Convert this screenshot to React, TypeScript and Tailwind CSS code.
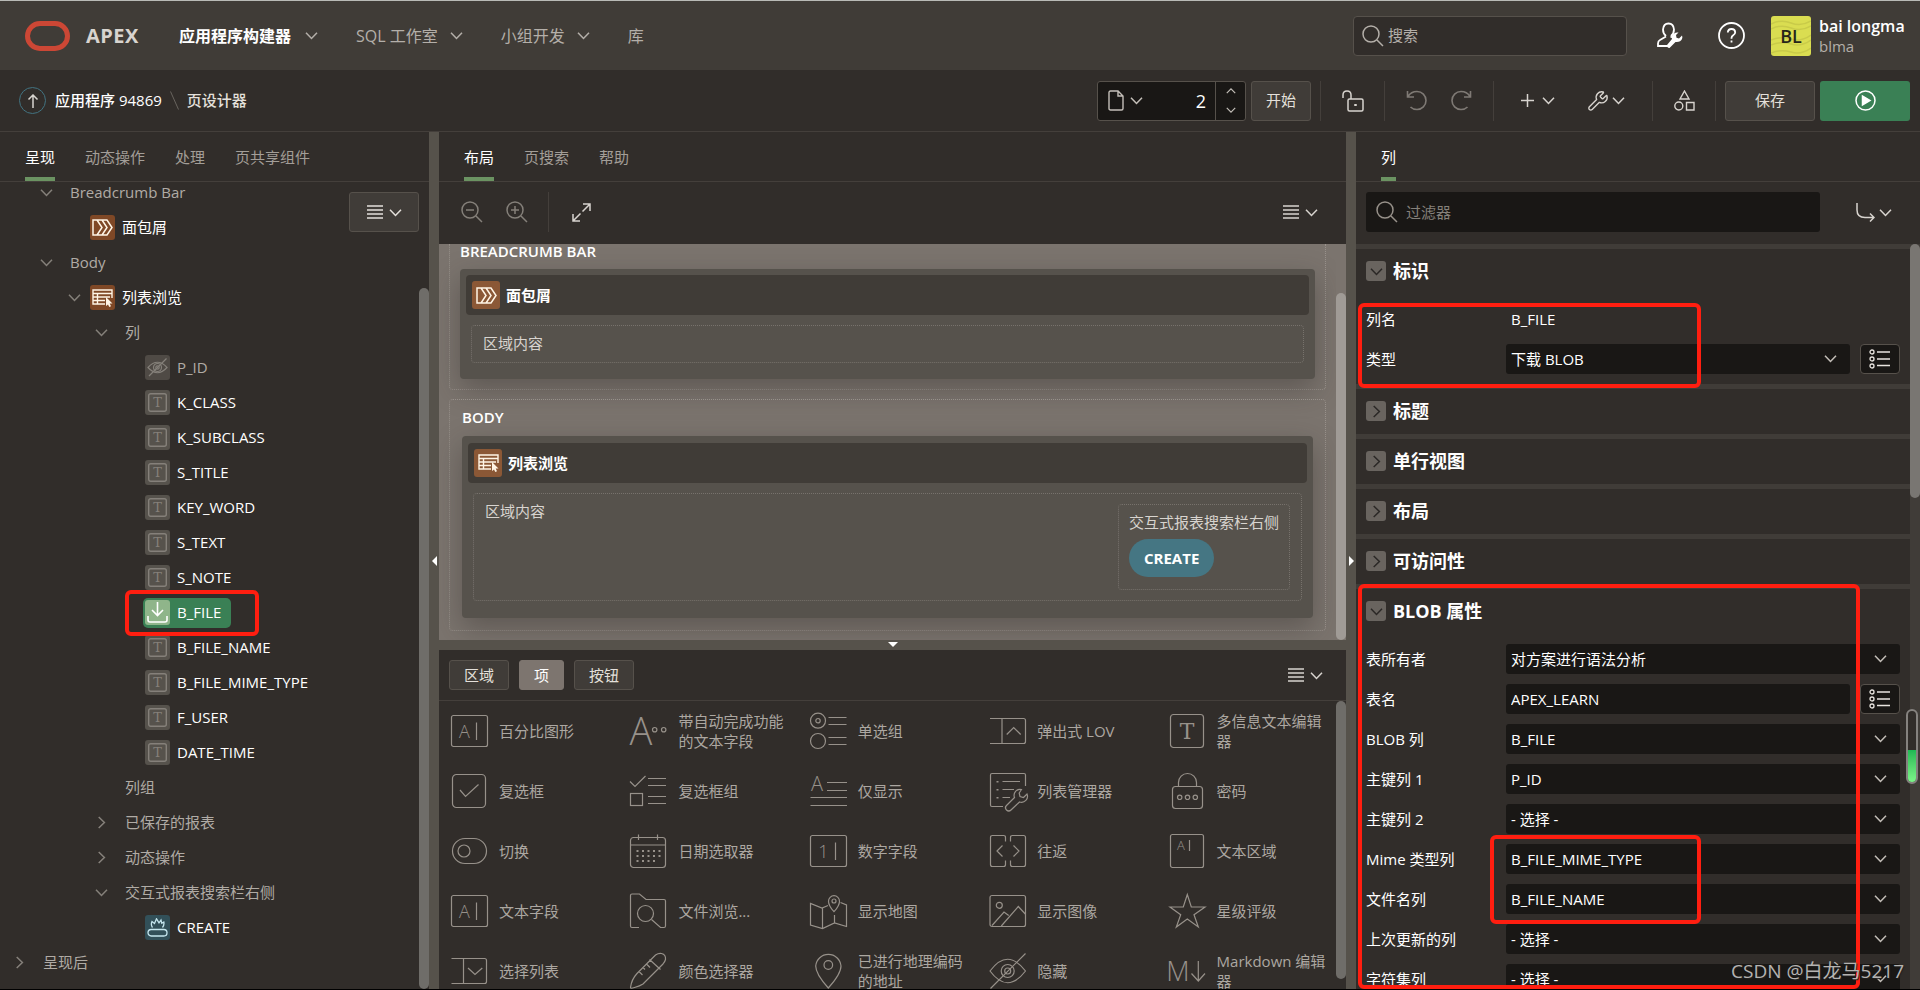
import { useState, type ReactNode } from "react"
import { Wrench } from "lucide-react"

/* ---------- icons ---------- */

function Chevron({ className = "" }: { className?: string }) {
  return (
    <svg width="13" height="13" viewBox="0 0 13 13" fill="none" stroke="currentColor" strokeWidth="1.5" className={`shrink-0 ${className}`}>
      <path d="M1 3.7 6.5 9.4 12 3.7" />
    </svg>
  )
}

function MenuLines() {
  return (
    <svg width="16" height="14" viewBox="0 0 16 14" stroke="currentColor" strokeWidth="1.3">
      <path d="M0 1h16M0 5h16M0 9h16M0 13h16" />
    </svg>
  )
}

function SearchIcon({ mark }: { mark?: string }) {
  return (
    <svg width="22" height="22" viewBox="0 0 22 22" fill="none" stroke="currentColor" strokeWidth="1.5" className="shrink-0">
      <circle cx="9" cy="9" r="8" />
      <path d="m15 15 6 6" />
      {mark && <path d={mark} />}
    </svg>
  )
}

function BreadcrumbIcon() {
  return (
    <svg width="21" height="17" viewBox="0 0 21 17" fill="none" stroke="#fff5e6" strokeWidth="1.5">
      <path d="M1 1h14l5 7.5-5 7.5H1zM5 1l5 7.5L5 16M10 1l5 7.5-5 7.5" />
    </svg>
  )
}

function ReportIcon() {
  return (
    <svg width="21" height="18" viewBox="0 0 21 18" fill="none" stroke="#fff5e6" strokeWidth="1.4">
      <path d="M13 15H1V1h19v8M1 4.5h19M1 8h17M1 11.5h12M5.5 4.5V15" />
      <path d="M14 8v9l2-1.5 1.300 2.500 1.700-.8-1.300-2.700h2.800z" fill="#fff5e6" stroke="none" />
    </svg>
  )
}

function TextColumnIcon() {
  return (
    <svg width="19" height="19" viewBox="0 0 19 19" fill="none" stroke="#85807a" strokeWidth="1.4">
      <rect x=".7" y=".7" width="17.6" height="17.6" rx="2" />
      <text x="9.5" y="14" textAnchor="middle" fontSize="13" fontFamily="DejaVu Serif, serif" fill="#85807a" stroke="none">T</text>
    </svg>
  )
}

function EyeOffIcon() {
  return (
    <svg width="21" height="19" viewBox="0 0 21 19" fill="none" stroke="#85807a" strokeWidth="1.2">
      <path d="M1 9.5Q10.5-1 20 9.5 10.5 20 1 9.500zM2 18 19.5.5" />
      <circle cx="10.5" cy="9.5" r="4" />
      <circle cx="10.5" cy="9.5" r="1.7" />
    </svg>
  )
}

function DownloadIcon() {
  return (
    <svg width="21" height="21" viewBox="0 0 21 21" fill="none" stroke="#fff" strokeWidth="1.6">
      <path d="M10.5 0v13M5 8l5.5 5.5L16 8M1 14v4q0 2 2 2h15q2 0 2-2v-4" />
    </svg>
  )
}

function HotButtonIcon() {
  return (
    <svg width="21" height="19" viewBox="0 0 21 19" fill="none" stroke="#c5e6ee" strokeWidth="1.3">
      <rect x="1" y="11.5" width="19" height="6.5" rx="3.2" />
      <path d="M5.5 9.500Q3.500 7 5 3.500l2.500 2L9.500.8l2.500 4 2-2.800.8 3.300 2-1.300Q17.500 7 15.500 9.500" />
    </svg>
  )
}

function ListIcon() {
  return (
    <svg width="22" height="20" viewBox="0 0 22 20" fill="none" stroke="#e8e4df" strokeWidth="1.3">
      <circle cx="3" cy="3" r="2" />
      <circle cx="3" cy="10" r="2" />
      <circle cx="3" cy="17" r="2" />
      <path d="M8 3h13M8 10h13M8 16.5h13" />
    </svg>
  )
}

function Glyph({ x, y, size, serif, children }: { x: number; y: number; size: number; serif?: boolean; children: string }) {
  return (
    <text x={x} y={y} fontSize={size} textAnchor="middle" fontWeight={300} fontFamily={serif ? "DejaVu Serif, serif" : "Open Sans, sans-serif"} fill="currentColor" stroke="none">
      {children}
    </text>
  )
}

const boxedText = (label: string) => (
  <>
    <rect x="1.5" y="3.5" width="36" height="31" rx="2" />
    <Glyph x={14.5} y={25.5} size={18}>{label}</Glyph>
    <path d="M26.5 10.5v17.5" />
  </>
)

const paletteItems: { label: string; icon: ReactNode }[] = [
  { label: "百分比图形", icon: boxedText("A") },
  {
    label: "带自动完成功能的文本字段",
    icon: (
      <>
        <Glyph x={12} y={33} size={38}>A</Glyph>
        <circle cx="25.7" cy="17.7" r="2.2" />
        <circle cx="34.7" cy="17.7" r="2.2" />
      </>
    ),
  },
  {
    label: "单选组",
    icon: (
      <>
        <circle cx="9" cy="8.7" r="7.5" />
        <circle cx="9" cy="8.7" r="2.2" />
        <circle cx="9" cy="29" r="7.5" />
        <path d="M19.5 5.5h18M19.5 12.5h18M19.5 25.5h18M19.5 32.5h18" />
      </>
    ),
  },
  { label: "弹出式 LOV", icon: <path d="M2 6.5h33.5q2 0 2 2v21q0 2-2 2H2M14 6.5v25M18.7 22.5l7-7 7 7" /> },
  {
    label: "多信息文本编辑器",
    icon: (
      <>
        <rect x="2.5" y="2.5" width="33" height="33" rx="3" />
        <Glyph x={19} y={27} size={22} serif>T</Glyph>
      </>
    ),
  },
  {
    label: "复选框",
    icon: (
      <>
        <rect x="2.5" y="2.5" width="33" height="33" rx="4" />
        <path d="m10 18 5.5 6.5 13-12" />
      </>
    ),
  },
  {
    label: "复选框组",
    icon: (
      <>
        <path d="m1 9.5 5 5L16.500 4M19 6.5h18M19 13.5h18M19 24.5h18M19 31.5h18" />
        <rect x="1.5" y="21.5" width="12" height="12" />
      </>
    ),
  },
  {
    label: "仅显示",
    icon: (
      <>
        <Glyph x={8} y={19} size={20}>A</Glyph>
        <path d="M18 10.5h20M18 18.5h20M1.5 25.5H38M1.5 33.5H38" />
      </>
    ),
  },
  {
    label: "列表管理器",
    icon: (
      <>
        <path d="M15 34.5H4q-1.500 0-1.500-1.500V3q0-1.500 1.500-1.500h32q1.500 0 1.500 1.500v11M14.500 9.500H32M14.500 17.500H26M14.500 25.500H22" />
        <path d="M9.5 9v1.5M9.5 17v1.5M9.5 25v1.5" strokeWidth="2" />
        <path d="M33.5 17.5a6 6 0 0 0-7 8L18.500 33.500a3 3 0 0 0 4.500 4.500l8.500-8a6 6 0 0 0 7.500-8l-3.500 3.500-3.500-1-.8-3.500z" />
      </>
    ),
  },
  {
    label: "密码",
    icon: (
      <>
        <rect x="4.5" y="14.5" width="30" height="22" rx="3" />
        <path d="M10.5 14.5v-4a9 9 0 0 1 18 0v4" />
        <circle cx="11.7" cy="25.3" r="2.2" />
        <circle cx="19.5" cy="25.3" r="2.2" />
        <circle cx="27.3" cy="25.3" r="2.2" />
      </>
    ),
  },
  {
    label: "切换",
    icon: (
      <>
        <rect x="2.5" y="6.5" width="34" height="25" rx="12.5" />
        <circle cx="14" cy="19" r="6" />
      </>
    ),
  },
  {
    label: "日期选取器",
    icon: (
      <>
        <rect x="1.5" y="5.5" width="35" height="30" rx="3" />
        <path d="M1.5 13h35M9.5 2.5V8M28.5 2.5V8" />
        <path d="M7.5 19h24M7.5 24h24M7.5 29h19" strokeWidth="2" strokeDasharray="2 3.5" />
      </>
    ),
  },
  { label: "数字字段", icon: boxedText("1") },
  {
    label: "往返",
    icon: <path d="M17.5 9.5v-4q0-2-2-2h-11q-2 0-2 2v27q0 2 2 2h11q2 0 2-2v-4M22.5 9.5v-4q0-2 2-2h11q2 0 2 2v27q0 2-2 2h-11q-2 0-2-2v-4M14.5 13.5 9 19l5.5 5.5M25.5 13.5 31 19l-5.5 5.5" />,
  },
  {
    label: "文本区域",
    icon: (
      <>
        <rect x="2.5" y="2.5" width="33" height="33" rx="2" />
        <Glyph x={13} y={18} size={13}>A</Glyph>
        <path d="M21.5 8v11" />
      </>
    ),
  },
  { label: "文本字段", icon: boxedText("A") },
  {
    label: "文件浏览...",
    icon: (
      <>
        <path d="M10 35.5H3q-1.500 0-1.500-1.500V3.500Q1.500 2 3 2h7.500l6.500 5.500h18q1.500 0 1.500 1.500v25q0 1.500-1.500 1.500h-3.500l-9-8" />
        <circle cx="16.5" cy="21.5" r="8" />
      </>
    ),
  },
  {
    label: "显示地图",
    icon: (
      <>
        <path d="M19 13.5l-6 2.5-11.500-4.500v21.500L13.500 36.500l12-5.500 12 3.500V13l-6-2.500M13.500 16v20.500M25.500 23v8" />
        <path d="M25 19.7q-5.500-6-5.500-10.500a5.500 5.500 0 0 1 11 0Q30.500 13.700 25 19.700z" />
        <circle cx="25" cy="9" r="2" />
      </>
    ),
  },
  {
    label: "显示图像",
    icon: (
      <>
        <rect x="2" y="3.5" width="35.5" height="31" rx="2" />
        <circle cx="11.3" cy="13.3" r="3" />
        <path d="M4 33.5 16 20l4.700 3.500M13.300 34 30.300 14.500l7 7.500" />
      </>
    ),
  },
  { label: "星级评级", icon: <path d="m19.300 2.500 4 12.500H37l-11 7.700L30.300 35l-11-8-11 8 4.400-12.300L2 15h13.300z" /> },
  { label: "选择列表", icon: <path d="M1.5 6.5h33q2 0 2 2v21q0 2-2 2h-33M13.5 6.5v25M18 16l7 6.500 7.300-6.500" /> },
  {
    label: "颜色选择器",
    icon: <path d="M1.500 35.500q1-8 6.500-14L26.500 3q3-2 6-1.500 4.500 1 4 6-.5 2-2.500 4.500L14 32q-3 2-8.500 3.500-4 1.500-4 0zM20.500 7.500l11 10M10 19.500l3.500 3.500M14 15.500l2 2M17.500 12l3.500 3.500" />,
  },
  {
    label: "已进行地理编码的地址",
    icon: (
      <>
        <path d="M19.300 36Q6.700 22 6.700 14a12.700 12.700 0 0 1 25.300 0Q32 22 19.300 36z" />
        <circle cx="19.3" cy="13" r="4.3" />
      </>
    ),
  },
  {
    label: "隐藏",
    icon: (
      <>
        <path d="M2 19Q19.500-4.500 37.500 19 19.500 42.500 2 19zM2.500 36.500l35-35" />
        <circle cx="19.7" cy="19" r="6.5" />
        <circle cx="19.7" cy="19" r="3" />
      </>
    ),
  },
  {
    label: "Markdown 编辑器",
    icon: (
      <>
        <Glyph x={10} y={29} size={27}>M</Glyph>
        <path d="M30.3 9v20M23.5 21.5l6.800 7.500 6.700-7.500" />
      </>
    ),
  },
]

/* ---------- data ---------- */

type NodeIcon = "breadcrumb" | "report" | "hidden" | "text" | "download" | "button"
type TreeNode = { label: string; level: 0 | 1 | 2 | 3 | 4; open?: boolean; icon?: NodeIcon; bright?: boolean }

const treeNodes: TreeNode[] = [
  { label: "Breadcrumb Bar", level: 1, open: true },
  { label: "面包屑", level: 2, icon: "breadcrumb", bright: true },
  { label: "Body", level: 1, open: true },
  { label: "列表浏览", level: 2, open: true, icon: "report", bright: true },
  { label: "列", level: 3, open: true },
  { label: "P_ID", level: 4, icon: "hidden" },
  { label: "K_CLASS", level: 4, icon: "text", bright: true },
  { label: "K_SUBCLASS", level: 4, icon: "text", bright: true },
  { label: "S_TITLE", level: 4, icon: "text", bright: true },
  { label: "KEY_WORD", level: 4, icon: "text", bright: true },
  { label: "S_TEXT", level: 4, icon: "text", bright: true },
  { label: "S_NOTE", level: 4, icon: "text", bright: true },
  { label: "B_FILE", level: 4, icon: "download", bright: true },
  { label: "B_FILE_NAME", level: 4, icon: "text", bright: true },
  { label: "B_FILE_MIME_TYPE", level: 4, icon: "text", bright: true },
  { label: "F_USER", level: 4, icon: "text", bright: true },
  { label: "DATE_TIME", level: 4, icon: "text", bright: true },
  { label: "列组", level: 3 },
  { label: "已保存的报表", level: 3, open: false },
  { label: "动态操作", level: 3, open: false },
  { label: "交互式报表搜索栏右侧", level: 3, open: true },
  { label: "CREATE", level: 4, icon: "button", bright: true },
  { label: "呈现后", level: 0, open: false },
]

const indent = { 0: "pl-0", 1: "pl-[27px]", 2: "pl-[55px]", 3: "pl-[82px]", 4: "pl-[110px]" }

const nodeIcons: Record<NodeIcon, { bg: string; icon: ReactNode }> = {
  breadcrumb: { bg: "bg-[#7f4826]", icon: <BreadcrumbIcon /> },
  report: { bg: "bg-[#7f4826]", icon: <ReportIcon /> },
  hidden: { bg: "bg-[#4f4a45]", icon: <EyeOffIcon /> },
  text: { bg: "bg-[#56524c]", icon: <TextColumnIcon /> },
  download: { bg: "bg-[#8fb58a]", icon: <DownloadIcon /> },
  button: { bg: "bg-[#325059]", icon: <HotButtonIcon /> },
}

const blobFields = [
  { label: "表所有者", value: "对方案进行语法分析" },
  { label: "表名", value: "APEX_LEARN", lov: true },
  { label: "BLOB 列", value: "B_FILE" },
  { label: "主键列 1", value: "P_ID" },
  { label: "主键列 2", value: "- 选择 -" },
  { label: "Mime 类型列", value: "B_FILE_MIME_TYPE" },
  { label: "文件名列", value: "B_FILE_NAME" },
  { label: "上次更新的列", value: "- 选择 -" },
  { label: "字符集列", value: "- 选择 -" },
]

/* ---------- shared pieces ---------- */

function Tabs({ items }: { items: string[] }) {
  const [active, setActive] = useState(items[0])
  return (
    <div className="flex h-[50px] shrink-0 gap-[30px] border-b border-[#443f3b] px-[25px]">
      {items.map((item) => (
        <button
          key={item}
          onClick={() => setActive(item)}
          className={`border-b-4 pt-[5px] ${active === item ? "border-[#6b9362] text-white" : "border-transparent text-[#a39e98]"}`}
        >
          {item}
        </button>
      ))}
    </div>
  )
}

function Marker({ className }: { className: string }) {
  return <div className={`pointer-events-none absolute z-20 rounded-md border-4 border-[#ff1e10] ${className}`} />
}

function LovButton({ label }: { label: string }) {
  return (
    <button aria-label={label} className="ml-2.5 flex h-[30px] w-10 shrink-0 items-center justify-center rounded-sm border border-[#56514b] bg-[#191715]">
      <ListIcon />
    </button>
  )
}

function SelectField({ id, label, value, lov }: { id: string; label: string; value: string; lov?: boolean }) {
  return (
    <div className="flex h-10 items-center">
      <label htmlFor={id} className="w-[140px] shrink-0">{label}</label>
      <div className="relative min-w-0 flex-1">
        <select id={id} className="block h-[30px] w-full appearance-none rounded-[3px] bg-[#191715] px-[5px] text-white">
          <option>{value}</option>
        </select>
        <Chevron className="pointer-events-none absolute top-2 right-[13px] text-[#c4bfb9]" />
      </div>
      {lov && <LovButton label={`${label}列表`} />}
    </div>
  )
}

function Group({ title, open, children }: { title: string; open?: boolean; children?: ReactNode }) {
  return (
    <section className="border-t-[5px] border-[#403c38] pr-2.5 pl-2.5">
      <button className="flex h-[45px] items-center gap-[7px] pb-px text-lg font-bold text-white">
        <span className="flex size-5 items-center justify-center rounded-[3px] bg-[#69645f] text-[#2b2826]">
          <Chevron className={open ? "" : "-rotate-90"} />
        </span>
        {title}
      </button>
      {children && <div className="py-[5px]">{children}</div>}
    </section>
  )
}

/* ---------- page parts ---------- */

function Header() {
  return (
    <header className="flex h-[69px] shrink-0 items-center bg-[#403c37] pl-[25px] text-base">
      <svg width="45" height="30" viewBox="0 0 45 30" fill="none" stroke="#cc4735" strokeWidth="5">
        <rect x="2.5" y="2.5" width="40" height="25" rx="12.5" />
      </svg>
      <span className="ml-4 text-xl font-bold tracking-wide text-[#d8d4cf]">APEX</span>
      <nav className="ml-10 flex items-center gap-[38px] text-[#b4afa9]">
        <a href="#builder" className="flex items-center gap-3.5 font-bold text-white">
          应用程序构建器
          <Chevron className="text-[#b4afa9]" />
        </a>
        <a href="#sql" className="flex items-center gap-3">
          SQL 工作室
          <Chevron />
        </a>
        <a href="#team" className="flex items-center gap-3">
          小组开发
          <Chevron />
        </a>
        <a href="#gallery">库</a>
      </nav>

      <div className="ml-auto flex items-center">
        <label className="flex h-10 w-[274px] items-center gap-1 rounded border border-[#56514b] bg-[#312d2a] pl-2 text-[15px] text-[#b4afa9]">
          <SearchIcon />
          <input aria-label="搜索" placeholder="搜索" className="min-w-0 flex-1 bg-transparent outline-none placeholder:text-[#b4afa9]" />
        </label>
        <button aria-label="管理" className="ml-[30px] text-white">
          <svg width="27" height="27" viewBox="0 0 27 27" fill="none" stroke="currentColor" strokeWidth="1.8">
            <path d="M9 14Q6 11.500 6 7.500 6.500 1.500 11.500 1.500T17 7.500Q17 11.500 14 14M9 14.500 3 18q-2 1-2 3.500V24h10" />
            <path d="M25 13.500l-3 3-2.500-.8-.5-2.700 2.500-2.500q-5-.5-6.500 3.500-.5 1.500 0 3l-5 6q-.5 2.500 2.500 3l6-6q5 .5 6.500-3 .8-2 0-3.500z" fill="currentColor" stroke="none" />
            <path d="M13.500 14.500l2 1" />
          </svg>
        </button>
        <button aria-label="帮助" className="ml-[34px] text-white">
          <svg width="27" height="27" viewBox="0 0 27 27" fill="none" stroke="currentColor" strokeWidth="1.8">
            <circle cx="13.5" cy="13.5" r="12.5" />
            <path d="M9.800 10.500Q10 7 13.500 7t3.700 3.200q0 1.800-2 3-1.700 1.100-1.700 2.800v.8M13.500 18.500v2" />
          </svg>
        </button>
        <button className="ml-[26px] flex w-[149px] items-center gap-2 text-left">
          <span className="relative flex size-10 items-center justify-center overflow-hidden rounded-[3px] bg-[#dadd51] text-lg font-semibold text-[#26251a]">
            <svg className="absolute inset-0" width="40" height="40" fill="none" stroke="#c9cb49" strokeWidth="1.5">
              <path d="M0 8q10-5 20-1t20-2M0 13q10-5 20-1t20-2M0 24q10-4 20-1t20-4M0 29q10-4 20-1t20-4M0 37q10-4 20-1t20-4" />
            </svg>
            <span className="relative">BL</span>
          </span>
          <span className="leading-5">
            <b className="block font-semibold text-white">bai longma</b>
            <span className="block text-[15px] text-[#b4afa9]">blma</span>
          </span>
        </button>
      </div>
    </header>
  )
}

function Toolbar() {
  return (
    <div className="flex h-[62px] shrink-0 items-center border-b border-[#443f3b] pr-2.5 pl-[19px]">
      <button aria-label="上一级" className="flex size-[27px] items-center justify-center rounded-full border border-[#427381] text-[#d8d4cf]">
        <svg width="12" height="14" viewBox="0 0 12 14" fill="none" stroke="currentColor" strokeWidth="1.5">
          <path d="M6 14V1M1.5 5.5 6 1l4.500 4.500" />
        </svg>
      </button>
      <a href="#app" className="ml-[9px] font-medium text-white">应用程序 94869</a>
      <svg width="9" height="19" viewBox="0 0 9 19" stroke="#69645f" className="mx-2">
        <path d="M.5.5l8 18" />
      </svg>
      <span className="font-medium text-[#e4e0db]">页设计器</span>

      <div className="ml-auto flex h-10 items-center">
        <div className="flex h-10 w-[149px] items-center rounded-[3px] border border-[#56514b] bg-[#191715] pl-2.5 text-[#c4bfb9]">
          <button aria-label="页查找器" className="flex items-center gap-1.5">
            <svg width="16" height="21" viewBox="0 0 16 21" fill="none" stroke="currentColor" strokeWidth="1.4">
              <path d="M1 2.500Q1 1 2.500 1H10l5 5v12.500q0 1.500-1.500 1.500h-11Q1 20 1 18.500zM10 1v5h5" />
            </svg>
            <Chevron />
          </button>
          <input aria-label="页" defaultValue="2" className="w-0 min-w-0 flex-1 bg-transparent pr-[9px] text-right text-lg text-white outline-none" />
          <div className="flex h-full w-[30px] flex-col items-center justify-around border-l border-[#56514b]">
            <button aria-label="下一页"><Chevron className="size-2.5 rotate-180" /></button>
            <button aria-label="上一页"><Chevron className="size-2.5" /></button>
          </div>
        </div>
        <button className="ml-[5px] h-10 w-[60px] rounded-[3px] border border-[#56514b] bg-[#403c38] text-[#e4e0db]">开始</button>

        <div className="ml-[9px] flex h-10 w-16 items-center justify-center border-l border-[#443f3b] text-[#d8d4cf]">
          <button aria-label="锁定">
            <svg width="22" height="22" viewBox="0 0 22 22" fill="none" stroke="currentColor" strokeWidth="1.5">
              <rect x="6" y="9" width="15" height="12" rx="1.5" />
              <path d="M1 8V5q0-4 4-4t4 4v4" />
              <path d="M13.5 14v2" strokeWidth="2.5" />
            </svg>
          </button>
        </div>
        <div className="flex h-10 w-[109px] items-center justify-center gap-6 border-l border-[#443f3b] text-[#7f7a75]">
          <button aria-label="撤消">
            <svg width="21" height="21" viewBox="0 0 21 21" fill="none" stroke="currentColor" strokeWidth="1.6">
              <path d="M1.5 1v6H8M2 6.500Q5 1.500 11 1.500a9 9 0 0 1 0 18q-4 0-6.500-2.500" />
            </svg>
          </button>
          <button aria-label="重做">
            <svg width="21" height="21" viewBox="0 0 21 21" fill="none" stroke="currentColor" strokeWidth="1.6">
              <path d="M19.5 1v6H13M19 6.500Q16 1.500 10 1.500a9 9 0 0 0 0 18q4 0 6.500-2.500" />
            </svg>
          </button>
        </div>
        <div className="flex h-10 w-[159px] items-center justify-center gap-8 border-l border-[#443f3b] text-[#d8d4cf]">
          <button aria-label="创建" className="flex items-center gap-2">
            <svg width="13" height="13" stroke="currentColor" strokeWidth="1.5">
              <path d="M0 6.5h13M6.5 0v13" />
            </svg>
            <Chevron />
          </button>
          <button aria-label="实用程序" className="flex items-center gap-[3px]">
            <Wrench size={22} strokeWidth={1.5} />
            <Chevron />
          </button>
        </div>
        <div className="flex h-10 w-[63px] items-center justify-center border-l border-[#443f3b] text-[#d8d4cf]">
          <button aria-label="共享组件">
            <svg width="21" height="21" viewBox="0 0 21 21" fill="none" stroke="currentColor" strokeWidth="1.4">
              <path d="M10.5 1 15 9H6zM12.5 12.5H20V20h-7.500z" />
              <circle cx="4.8" cy="16" r="4" />
            </svg>
          </button>
        </div>
        <div className="h-10 w-2.5 border-l border-[#443f3b]" />
        <button className="h-10 w-[90px] rounded-[3px] border border-[#56514b] bg-[#403c38] text-[#e4e0db]">保存</button>
        <button aria-label="运行" className="ml-[5px] flex h-10 w-[90px] items-center justify-center rounded-[3px] bg-[#3a8055]">
          <svg width="21" height="21" viewBox="0 0 21 21" fill="none" stroke="#fff" strokeWidth="1.5">
            <circle cx="10.5" cy="10.5" r="9.5" />
            <path d="M7.5 6v9l7.500-4.500z" fill="#fff" />
          </svg>
        </button>
      </div>
    </div>
  )
}

function TreeRow({ node, selected, onSelect }: { node: TreeNode; selected: boolean; onSelect: () => void }) {
  const icon = node.icon && nodeIcons[node.icon]
  return (
    <li className={`relative flex h-[35px] items-center ${indent[node.level]}`}>
      <span className="flex w-[33px] shrink-0 pl-[13px] text-[#85807a]">
        {node.open !== undefined && <Chevron className={node.open ? "" : "-rotate-90"} />}
      </span>
      <button onClick={onSelect} className={`flex h-[30px] items-center rounded-[5px] pr-2.5 pl-0.5 ${selected ? "bg-[#3a8055]" : ""} ${node.bright ? "text-white" : "text-[#b0aba5]"}`}>
        {icon && <span className={`flex size-[25px] items-center justify-center rounded-[3px] ${icon.bg}`}>{icon.icon}</span>}
        <span className={icon ? "pl-[7px]" : "pl-2"}>{node.label}</span>
      </button>
      {selected && <Marker className="-top-[5px] left-[125px] h-[46px] w-[134px]" />}
    </li>
  )
}

function TreePanel() {
  const [selected, setSelected] = useState("B_FILE")
  return (
    <aside className="flex w-[429px] shrink-0 flex-col">
      <Tabs items={["呈现", "动态操作", "处理", "页共享组件"]} />
      <div className="relative flex min-h-0 flex-1 overflow-hidden">
        <ul className="-mt-[7px] min-w-0 flex-1">
          {treeNodes.map((node) => (
            <TreeRow key={node.label + node.level} node={node} selected={selected === node.label} onSelect={() => setSelected(node.label)} />
          ))}
        </ul>
        <button aria-label="树菜单" className="absolute top-2.5 right-2.5 flex h-10 w-[70px] items-center justify-center gap-1.5 rounded-[3px] border border-[#56514b] bg-[#403c38] text-[#e4e0db]">
          <MenuLines />
          <Chevron />
        </button>
        <div className="mt-[106px] w-2.5 rounded-full bg-[#6f6d69]" />
      </div>
    </aside>
  )
}

function Splitter({ direction }: { direction: "left" | "right" }) {
  return (
    <div className="flex w-2.5 shrink-0 items-center justify-center bg-[#56524b]">
      <svg width="5" height="10" fill="#fff">
        <path d={direction === "left" ? "M5 0v10L0 5z" : "M0 0v10l5-5z"} />
      </svg>
    </div>
  )
}

function RegionHeader({ icon, title }: { icon: ReactNode; title: string }) {
  return (
    <div className="flex h-10 items-center gap-1.5 rounded bg-[#403c37] px-1.5 font-bold">
      <span className="flex size-7 items-center justify-center rounded-[3px] bg-[#8b5836]">{icon}</span>
      {title}
    </div>
  )
}

function LayoutCanvas() {
  return (
    <div className="flex min-h-0 flex-1 bg-[#7b746e] text-white">
      <div className="min-w-0 flex-1 overflow-hidden px-2.5">
        <section className="rounded-b border border-t-0 border-dotted border-[#98918b] px-2.5 pb-2.5">
          <h2 className="leading-[14px] font-semibold">BREADCRUMB BAR</h2>
          <div className="mt-[11px] rounded bg-[#56524c] px-1.5 pt-1.5 pb-4 shadow-[0_10px_28px_rgba(49,45,42,0.4)]">
            <RegionHeader icon={<BreadcrumbIcon />} title="面包屑" />
            <div className="mx-[5px] mt-2.5 h-[38px] rounded-sm border border-dotted border-[#77726c] px-[11px] leading-[34px] text-[#d8d4cf]">区域内容</div>
          </div>
        </section>
        <section className="mt-[9px] rounded border border-dotted border-[#98918b] px-3 pt-[7px] pb-3">
          <h2 className="leading-5 font-semibold">BODY</h2>
          <div className="mt-[9px] rounded bg-[#56524c] px-1.5 pt-[7px] pb-[17px] shadow-[0_10px_28px_rgba(49,45,42,0.4)]">
            <RegionHeader icon={<ReportIcon />} title="列表浏览" />
            <div className="mx-[5px] mt-2.5 flex items-start justify-between rounded-sm border border-dotted border-[#77726c] py-2.5 pr-[11px] pl-[11px] text-[#d8d4cf]">
              <span className="leading-[14px]">区域内容</span>
              <div className="rounded-sm border border-dotted border-[#77726c] px-2.5 pt-[7px] pb-3">
                <div className="leading-5">交互式报表搜索栏右侧</div>
                <button className="mt-[7px] h-[38px] rounded-full bg-[#457683] px-[15px] font-bold text-white">CREATE</button>
              </div>
            </div>
          </div>
        </section>
      </div>
      <div className="mt-[49px] w-2.5 shrink-0 rounded-full bg-[#a09b96]" />
    </div>
  )
}

function Palette() {
  const [type, setType] = useState("项")
  return (
    <div className="flex h-[339px] shrink-0 flex-col">
      <div className="flex h-[51px] shrink-0 items-center gap-2.5 border-b border-[#443f3b] pr-[23px] pl-2.5">
        {["区域", "项", "按钮"].map((t) => (
          <button
            key={t}
            onClick={() => setType(t)}
            className={`h-[30px] rounded-[3px] border px-3.5 ${type === t ? "border-[#7d756f] bg-[#7d756f] text-white" : "border-[#56514b] bg-[#403c38] text-[#e4e0db]"}`}
          >
            {t}
          </button>
        ))}
        <button aria-label="图库菜单" className="ml-auto flex items-center gap-1.5 text-[#d8d4cf]">
          <MenuLines />
          <Chevron />
        </button>
      </div>
      <div className="flex min-h-0 flex-1 overflow-hidden">
        <ul className="grid min-w-0 flex-1 auto-rows-[60px] grid-cols-5">
          {paletteItems.map((item) => (
            <li key={item.label} className="flex items-center gap-[11px] pr-1.5 pl-[11px] leading-5 text-[#aca7a1]">
              <svg width="38" height="38" viewBox="0 0 38 38" fill="none" stroke="currentColor" strokeWidth="1.2" className="shrink-0 overflow-visible text-[#97918a]">
                {item.icon}
              </svg>
              {item.label}
            </li>
          ))}
        </ul>
        <div className="mb-2.5 w-2.5 shrink-0 rounded-full bg-[#6f6d69]" />
      </div>
    </div>
  )
}

function CenterPanel() {
  return (
    <main className="flex min-w-0 flex-1 flex-col">
      <Tabs items={["布局", "页搜索", "帮助"]} />
      <div className="flex h-[62px] shrink-0 items-center pr-7 pb-0.5 pl-[22px] text-[#d8d4cf]">
        <button aria-label="缩小" className="text-[#85807a]"><SearchIcon mark="M5 9h8" /></button>
        <button aria-label="放大" className="ml-[23px] text-[#85807a]"><SearchIcon mark="M5 9h8M9 5v8" /></button>
        <div className="ml-5 h-10 border-l border-[#443f3b]" />
        <button aria-label="展开" className="ml-[23px]">
          <svg width="19" height="19" viewBox="0 0 19 19" fill="none" stroke="currentColor" strokeWidth="1.5">
            <path d="M11 1h7v7M18 1l-7.500 7.500M1 11v7h7M1 18l7.500-7.500" />
          </svg>
        </button>
        <button aria-label="布局菜单" className="ml-auto flex items-center gap-1.5">
          <MenuLines />
          <Chevron />
        </button>
      </div>
      <LayoutCanvas />
      <div className="flex h-2.5 shrink-0 items-start justify-center bg-[#56524b] pt-0.5">
        <svg width="10" height="5" fill="#fff"><path d="M0 0h10L5 5z" /></svg>
      </div>
      <Palette />
    </main>
  )
}

function PropertyPanel() {
  return (
    <aside className="relative flex w-[564px] shrink-0 flex-col">
      <Tabs items={["列"]} />
      <div className="flex h-[62px] shrink-0 items-center pr-7 pb-0.5 pl-2.5">
        <label className="flex h-10 w-[454px] items-center gap-2 rounded-[3px] bg-[#191715] pl-2.5 text-[#97918a]">
          <SearchIcon />
          <input aria-label="过滤器" placeholder="过滤器" className="min-w-0 flex-1 bg-transparent outline-none placeholder:text-[#85807a]" />
        </label>
        <button aria-label="转到组" className="ml-auto flex items-center gap-1 text-[#d8d4cf]">
          <svg width="19" height="19" viewBox="0 0 19 19" fill="none" stroke="currentColor" strokeWidth="1.5">
            <path d="M1 0v7q0 7.500 8 7.500h9M14 10.500l4 4-4 4" />
          </svg>
          <Chevron />
        </button>
      </div>
      <div className="flex min-h-0 flex-1 overflow-hidden text-white">
        <div className="min-w-0 flex-1">
          <Group title="标识" open>
            <div className="flex h-10 items-center">
              <span className="w-[145px]">列名</span>
              <span>B_FILE</span>
            </div>
            <SelectField id="column-type" label="类型" value="下载 BLOB" lov />
          </Group>
          <Group title="标题" />
          <Group title="单行视图" />
          <Group title="布局" />
          <Group title="可访问性" />
          <Group title="BLOB 属性" open>
            {blobFields.map((field, i) =>
              field.lov ? (
                <div key={field.label} className="flex h-10 items-center">
                  <label htmlFor={`blob-${i}`} className="w-[140px] shrink-0">{field.label}</label>
                  <input id={`blob-${i}`} defaultValue={field.value} className="h-[30px] min-w-0 flex-1 rounded-[3px] bg-[#191715] px-[5px] outline-none" />
                  <LovButton label={`${field.label}列表`} />
                </div>
              ) : (
                <SelectField key={field.label} id={`blob-${i}`} label={field.label} value={field.value} />
              ),
            )}
          </Group>
        </div>
        <div className="w-2.5 shrink-0 bg-[#403c38]">
          <div className="h-[254px] rounded-full bg-[#797672]" />
        </div>
      </div>

      <Marker className="top-[171px] left-0.5 h-[85px] w-[343px]" />
      <Marker className="top-[452px] bottom-0 left-0.5 w-[502px]" />
      <Marker className="top-[703px] left-[134px] h-[89px] w-[211px]" />

      <div className="absolute top-[577px] right-0.5 flex h-[75px] w-3 flex-col justify-end rounded-full border-2 border-[#85827f] bg-[#312d2a]">
        <div className="h-8 rounded-b-full bg-linear-to-b from-[#1db954] to-[#7cf58a]" />
      </div>
      <div className="pointer-events-none absolute right-4 bottom-1 z-30 text-[19px] text-[#b5b3b1] [text-shadow:1px_1px_1px_#222]">CSDN @白龙马5217</div>
    </aside>
  )
}

export default function App() {
  return (
    <div className="flex h-screen flex-col overflow-hidden border-t border-b border-t-[#b9bab6] border-b-black bg-[#312d2a] font-['Open_Sans','Noto_Sans_CJK_SC',sans-serif] text-[15px] text-[#a39e98]">
      <Header />
      <Toolbar />
      <div className="flex min-h-0 flex-1">
        <TreePanel />
        <Splitter direction="left" />
        <CenterPanel />
        <Splitter direction="right" />
        <PropertyPanel />
      </div>
    </div>
  )
}
